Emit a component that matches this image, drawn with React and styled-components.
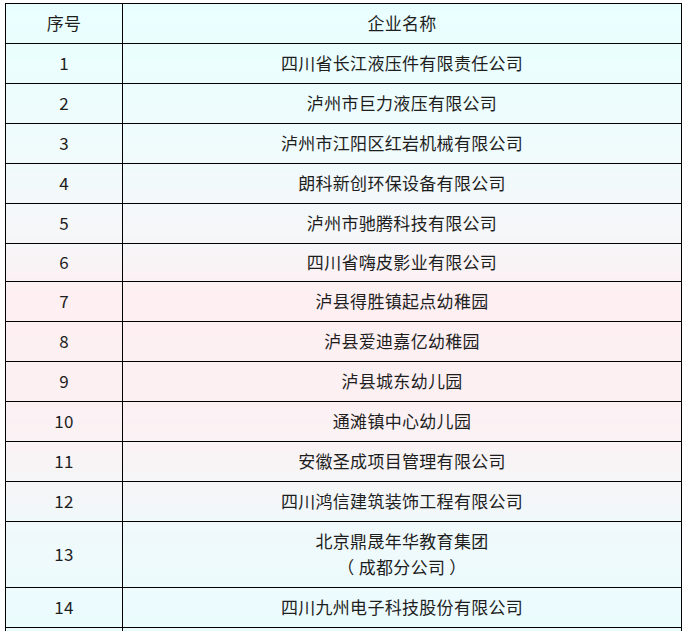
import React from "react";
import styled, { createGlobalStyle } from "styled-components";

const Global = createGlobalStyle`
  html, body { margin: 0; padding: 0; background: #ffffff; }
  body { font-family: "Noto Sans CJK SC", "Noto Sans", sans-serif; color: #1e1e1e; }
`;

const Table = styled.table`
  margin: 3px 0 0 5px;
  width: 677px;
  border-collapse: collapse;
  table-layout: fixed;
  background: linear-gradient(
    180deg,
    #e9ffff 0%,
    #eefcfd 18%,
    #f6f6f8 36%,
    #fdeff2 44%,
    #fdf0f3 60%,
    #f7f4f6 70%,
    #eff9fb 80%,
    #e9fdfe 100%
  );
`;

const Cell = styled.td`
  border: 1px solid #000;
  padding: ${(p) => (p.$compact ? "5px 0 6px" : "6px 0 7px")};
  font-size: 17px;
  letter-spacing: 0.3px;
  line-height: 26px;
  text-align: center;
  vertical-align: middle;
  color: #1e1e1e;
  font-weight: 400;
  white-space: pre;
`;

const HeadCell = styled(Cell).attrs({ as: "th" })``;

const Line = styled.div`
  line-height: 26px;
`;

const rows = [
  ["1", ["四川省长江液压件有限责任公司"]],
  ["2", ["泸州市巨力液压有限公司"]],
  ["3", ["泸州市江阳区红岩机械有限公司"]],
  ["4", ["朗科新创环保设备有限公司"]],
  ["5", ["泸州市驰腾科技有限公司"]],
  ["6", ["四川省嗨皮影业有限公司"], true],
  ["7", ["泸县得胜镇起点幼稚园"]],
  ["8", ["泸县爱迪嘉亿幼稚园"]],
  ["9", ["泸县城东幼儿园"]],
  ["10", ["通滩镇中心幼儿园"]],
  ["11", ["安徽圣成项目管理有限公司"]],
  ["12", ["四川鸿信建筑装饰工程有限公司"]],
  ["13", ["北京鼎晟年华教育集团", "（ 成都分公司 ）"]],
  ["14", ["四川九州电子科技股份有限公司"]],
];

export default function App() {
  return (
    <>
      <Global />
      <Table>
        <colgroup>
          <col style={{ width: "117px" }} />
          <col />
        </colgroup>
        <thead>
          <tr>
            <HeadCell>序号</HeadCell>
            <HeadCell>企业名称</HeadCell>
          </tr>
        </thead>
        <tbody>
          {rows.map(([n, lines, compact]) => (
            <tr key={n}>
              <Cell $compact={compact}>{n}</Cell>
              <Cell $compact={compact}>
                {lines.map((l, i) => (
                  <Line key={i}>{l}</Line>
                ))}
              </Cell>
            </tr>
          ))}
          <tr>
            <Cell>{"\u00a0"}</Cell>
            <Cell>{"\u00a0"}</Cell>
          </tr>
        </tbody>
      </Table>
    </>
  );
}
